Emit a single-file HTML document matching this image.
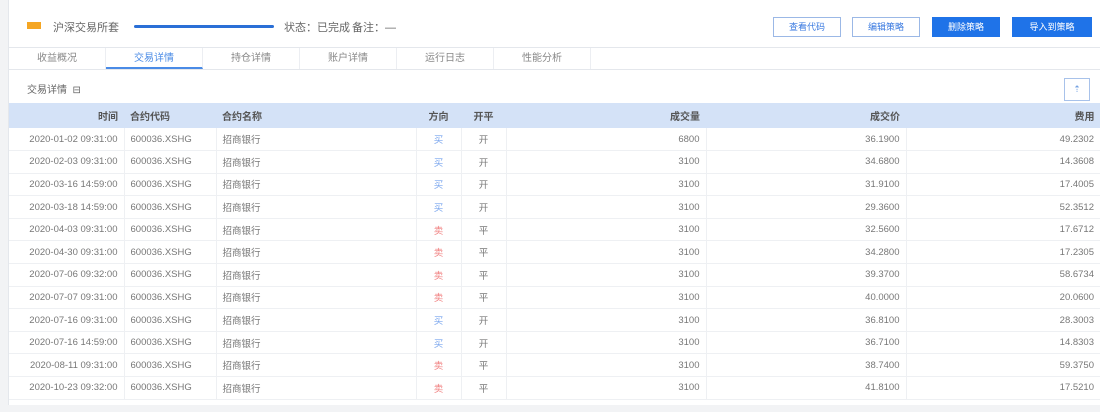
<!DOCTYPE html><html><head><meta charset="utf-8"><style>
*{margin:0;padding:0;box-sizing:border-box}
body{width:1100px;height:412px;background:#f2f3f5;font-family:"Liberation Sans","Noto Sans CJK SC",sans-serif;font-size:10px;color:#666;overflow:hidden;position:relative}
.main{position:absolute;left:8px;top:0;width:1092px;height:405px;background:#fff;border-left:1px solid #e4e7ec}
.hdr{height:48px;position:relative;border-bottom:1px solid #e4e7ec}
.tag{position:absolute;left:18px;top:22px;width:14px;height:7px;background:#f5a623}
.t{position:absolute;top:19px;font-size:11px;color:#666;white-space:nowrap}
.bar{position:absolute;left:125px;top:25px;width:140px;height:3px;background:#2a6fd6;border-radius:2px}
.btn{position:absolute;top:17px;height:20px;width:68px;font-size:9px;text-align:center;line-height:18px;border:1px solid #9bb8e6;color:#3a7ae0;background:#fff}
.btn.p{background:#1f73e8;color:#fff;border-color:#1f73e8}
.tabs{height:22px;border-bottom:1px solid #e4e7ec;display:flex}
.tabs div{width:97px;text-align:center;line-height:22px;border-right:1px solid #eceef2;color:#888}
.tabs .a{color:#4a8be6;border-bottom:2px solid #4a8be6}
.tool{height:33px;position:relative}
.up{position:absolute;right:10px;top:8px;width:26px;height:23px;border:1px solid #a8c2ea;color:#6a9be0;text-align:center;line-height:21px;font-size:9px}
table{border-collapse:collapse;width:1092px;table-layout:fixed}
th{background:#d4e2f7;height:25px;color:#555;font-weight:bold;font-size:10px}
td{height:22.6px;border-bottom:1px solid #eef0f3;border-right:1px solid #eef0f3;color:#777;font-size:9.5px}
th,td{padding:0 6px;white-space:nowrap;overflow:hidden}
.r{text-align:right}.c{text-align:center}
.b{color:#7aa6ee}.red{color:#f08080}
</style></head><body>
<div class="main">
<div class="hdr"><div class="tag"></div>
<div class="t" style="left:44px">沪深交易所套</div><div class="bar"></div>
<div class="t" style="left:275px">状态：已完成</div><div class="t" style="left:343px">备注：—</div>
<div class="btn" style="left:764px">查看代码</div><div class="btn" style="left:843px">编辑策略</div>
<div class="btn p" style="left:923px">删除策略</div><div class="btn p" style="left:1003px;width:80px">导入到策略</div></div>
<div class="tabs"><div>收益概况</div><div class="a">交易详情</div><div>持仓详情</div><div>账户详情</div><div>运行日志</div><div>性能分析</div></div>
<div class="tool"><div class="t" style="left:18px;top:11px;font-size:10px">交易详情 &nbsp;⊟</div><div class="up">⇡</div></div>
<table><colgroup><col style="width:115px"><col style="width:92px"><col style="width:200px"><col style="width:45px"><col style="width:45px"><col style="width:200px"><col style="width:200px"><col></colgroup>
<tr><th class="r">时间</th><th style="text-align:left">合约代码</th><th style="text-align:left">合约名称</th><th class="c">方向</th><th class="c">开平</th><th class="r">成交量</th><th class="r">成交价</th><th class="r">费用</th></tr>
<tr><td class="r">2020-01-02 09:31:00</td><td>600036.XSHG</td><td>招商银行</td><td class="c b">买</td><td class="c">开</td><td class="r">6800</td><td class="r">36.1900</td><td class="r">49.2302</td></tr>
<tr><td class="r">2020-02-03 09:31:00</td><td>600036.XSHG</td><td>招商银行</td><td class="c b">买</td><td class="c">开</td><td class="r">3100</td><td class="r">34.6800</td><td class="r">14.3608</td></tr>
<tr><td class="r">2020-03-16 14:59:00</td><td>600036.XSHG</td><td>招商银行</td><td class="c b">买</td><td class="c">开</td><td class="r">3100</td><td class="r">31.9100</td><td class="r">17.4005</td></tr>
<tr><td class="r">2020-03-18 14:59:00</td><td>600036.XSHG</td><td>招商银行</td><td class="c b">买</td><td class="c">开</td><td class="r">3100</td><td class="r">29.3600</td><td class="r">52.3512</td></tr>
<tr><td class="r">2020-04-03 09:31:00</td><td>600036.XSHG</td><td>招商银行</td><td class="c red">卖</td><td class="c">平</td><td class="r">3100</td><td class="r">32.5600</td><td class="r">17.6712</td></tr>
<tr><td class="r">2020-04-30 09:31:00</td><td>600036.XSHG</td><td>招商银行</td><td class="c red">卖</td><td class="c">平</td><td class="r">3100</td><td class="r">34.2800</td><td class="r">17.2305</td></tr>
<tr><td class="r">2020-07-06 09:32:00</td><td>600036.XSHG</td><td>招商银行</td><td class="c red">卖</td><td class="c">平</td><td class="r">3100</td><td class="r">39.3700</td><td class="r">58.6734</td></tr>
<tr><td class="r">2020-07-07 09:31:00</td><td>600036.XSHG</td><td>招商银行</td><td class="c red">卖</td><td class="c">平</td><td class="r">3100</td><td class="r">40.0000</td><td class="r">20.0600</td></tr>
<tr><td class="r">2020-07-16 09:31:00</td><td>600036.XSHG</td><td>招商银行</td><td class="c b">买</td><td class="c">开</td><td class="r">3100</td><td class="r">36.8100</td><td class="r">28.3003</td></tr>
<tr><td class="r">2020-07-16 14:59:00</td><td>600036.XSHG</td><td>招商银行</td><td class="c b">买</td><td class="c">开</td><td class="r">3100</td><td class="r">36.7100</td><td class="r">14.8303</td></tr>
<tr><td class="r">2020-08-11 09:31:00</td><td>600036.XSHG</td><td>招商银行</td><td class="c red">卖</td><td class="c">平</td><td class="r">3100</td><td class="r">38.7400</td><td class="r">59.3750</td></tr>
<tr><td class="r">2020-10-23 09:32:00</td><td>600036.XSHG</td><td>招商银行</td><td class="c red">卖</td><td class="c">平</td><td class="r">3100</td><td class="r">41.8100</td><td class="r">17.5210</td></tr>
</table></div>
</body></html>
